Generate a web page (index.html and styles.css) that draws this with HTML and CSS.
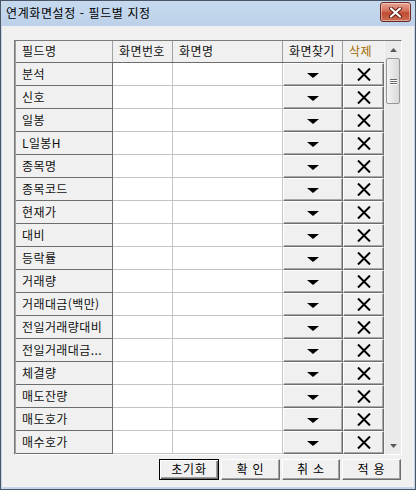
FILE: index.html
```html
<!DOCTYPE html>
<html lang="ko">
<head>
<meta charset="utf-8">
<title>연계화면설정 - 필드별 지정</title>
<link rel="stylesheet" href="styles.css">
</head>
<body>
<div class="win">
  <div class="titlebar">
    <span class="title">연계화면설정 - 필드별 지정</span>
    <div class="close">
      <svg width="15" height="11" viewBox="0 0 15 11"><path d="M3 1.5 L12 9.5 M12 1.5 L3 9.5" stroke="#5a1a10" stroke-width="4" stroke-linecap="round"/><path d="M3 1.5 L12 9.5 M12 1.5 L3 9.5" stroke="#fff" stroke-width="2.2" stroke-linecap="round"/></svg>
    </div>
  </div>
  <div class="body">
    <div class="gridbox">
      <div class="grid">
        <div class="row head">
          <div class="hc">필드명</div>
          <div class="hc">화면번호</div>
          <div class="hc">화면명</div>
          <div class="hc">화면찾기</div>
          <div class="hc del">삭제</div>
        </div>
        <div class="row"><div class="name">분석</div><div class="cell"></div><div class="cell"></div><div class="btn"><span class="tri"></span></div><div class="btn"><svg class="x" viewBox="0 0 14 13"><path d="M1 0.5 L13 12.5 M13 0.5 L1 12.5"/></svg></div></div>
        <div class="row"><div class="name">신호</div><div class="cell"></div><div class="cell"></div><div class="btn"><span class="tri"></span></div><div class="btn"><svg class="x" viewBox="0 0 14 13"><path d="M1 0.5 L13 12.5 M13 0.5 L1 12.5"/></svg></div></div>
        <div class="row"><div class="name">일봉</div><div class="cell"></div><div class="cell"></div><div class="btn"><span class="tri"></span></div><div class="btn"><svg class="x" viewBox="0 0 14 13"><path d="M1 0.5 L13 12.5 M13 0.5 L1 12.5"/></svg></div></div>
        <div class="row"><div class="name">L일봉H</div><div class="cell"></div><div class="cell"></div><div class="btn"><span class="tri"></span></div><div class="btn"><svg class="x" viewBox="0 0 14 13"><path d="M1 0.5 L13 12.5 M13 0.5 L1 12.5"/></svg></div></div>
        <div class="row"><div class="name">종목명</div><div class="cell"></div><div class="cell"></div><div class="btn"><span class="tri"></span></div><div class="btn"><svg class="x" viewBox="0 0 14 13"><path d="M1 0.5 L13 12.5 M13 0.5 L1 12.5"/></svg></div></div>
        <div class="row"><div class="name">종목코드</div><div class="cell"></div><div class="cell"></div><div class="btn"><span class="tri"></span></div><div class="btn"><svg class="x" viewBox="0 0 14 13"><path d="M1 0.5 L13 12.5 M13 0.5 L1 12.5"/></svg></div></div>
        <div class="row"><div class="name">현재가</div><div class="cell"></div><div class="cell"></div><div class="btn"><span class="tri"></span></div><div class="btn"><svg class="x" viewBox="0 0 14 13"><path d="M1 0.5 L13 12.5 M13 0.5 L1 12.5"/></svg></div></div>
        <div class="row"><div class="name">대비</div><div class="cell"></div><div class="cell"></div><div class="btn"><span class="tri"></span></div><div class="btn"><svg class="x" viewBox="0 0 14 13"><path d="M1 0.5 L13 12.5 M13 0.5 L1 12.5"/></svg></div></div>
        <div class="row"><div class="name">등락률</div><div class="cell"></div><div class="cell"></div><div class="btn"><span class="tri"></span></div><div class="btn"><svg class="x" viewBox="0 0 14 13"><path d="M1 0.5 L13 12.5 M13 0.5 L1 12.5"/></svg></div></div>
        <div class="row"><div class="name">거래량</div><div class="cell"></div><div class="cell"></div><div class="btn"><span class="tri"></span></div><div class="btn"><svg class="x" viewBox="0 0 14 13"><path d="M1 0.5 L13 12.5 M13 0.5 L1 12.5"/></svg></div></div>
        <div class="row"><div class="name">거래대금(백만)</div><div class="cell"></div><div class="cell"></div><div class="btn"><span class="tri"></span></div><div class="btn"><svg class="x" viewBox="0 0 14 13"><path d="M1 0.5 L13 12.5 M13 0.5 L1 12.5"/></svg></div></div>
        <div class="row"><div class="name">전일거래량대비</div><div class="cell"></div><div class="cell"></div><div class="btn"><span class="tri"></span></div><div class="btn"><svg class="x" viewBox="0 0 14 13"><path d="M1 0.5 L13 12.5 M13 0.5 L1 12.5"/></svg></div></div>
        <div class="row"><div class="name">전일거래대금...</div><div class="cell"></div><div class="cell"></div><div class="btn"><span class="tri"></span></div><div class="btn"><svg class="x" viewBox="0 0 14 13"><path d="M1 0.5 L13 12.5 M13 0.5 L1 12.5"/></svg></div></div>
        <div class="row"><div class="name">체결량</div><div class="cell"></div><div class="cell"></div><div class="btn"><span class="tri"></span></div><div class="btn"><svg class="x" viewBox="0 0 14 13"><path d="M1 0.5 L13 12.5 M13 0.5 L1 12.5"/></svg></div></div>
        <div class="row"><div class="name">매도잔량</div><div class="cell"></div><div class="cell"></div><div class="btn"><span class="tri"></span></div><div class="btn"><svg class="x" viewBox="0 0 14 13"><path d="M1 0.5 L13 12.5 M13 0.5 L1 12.5"/></svg></div></div>
        <div class="row"><div class="name">매도호가</div><div class="cell"></div><div class="cell"></div><div class="btn"><span class="tri"></span></div><div class="btn"><svg class="x" viewBox="0 0 14 13"><path d="M1 0.5 L13 12.5 M13 0.5 L1 12.5"/></svg></div></div>
        <div class="row"><div class="name">매수호가</div><div class="cell"></div><div class="cell"></div><div class="btn"><span class="tri"></span></div><div class="btn"><svg class="x" viewBox="0 0 14 13"><path d="M1 0.5 L13 12.5 M13 0.5 L1 12.5"/></svg></div></div>
      </div>
      <div class="scrollbar">
        <div class="arrow"><svg width="7" height="4" viewBox="0 0 7 4"><path d="M0 4 L3.5 0 L7 4 Z" fill="#5a5a5a"/></svg></div>
        <div class="thumb"><span class="grip"></span><span class="grip"></span><span class="grip"></span></div>
        <div class="track"></div>
        <div class="arrow"><svg width="7" height="4" viewBox="0 0 7 4"><path d="M0 0 L7 0 L3.5 4 Z" fill="#5a5a5a"/></svg></div>
      </div>
    </div>
    <div class="buttons">
      <div class="pbtn def">초기화</div>
      <div class="pbtn w59">확 인</div>
      <div class="pbtn w58">취 소</div>
      <div class="pbtn w59">적 용</div>
    </div>
  </div>
</div>
</body>
</html>
```
FILE: styles.css
```css
* { box-sizing: border-box; }
html, body { margin: 0; padding: 0; background: #fff; }
body {
  font-family: "Noto Sans CJK KR", "Noto Sans", sans-serif;
  font-size: 12px;
  color: #111;
  letter-spacing: 0.4px;
}
.win {
  width: 416px;
  height: 490px;
  border: 1px solid #4a5666;
  background: #c2d5ea;
  display: flex;
  flex-direction: column;
}
.titlebar {
  height: 25px;
  flex: none;
  display: flex;
  align-items: flex-start;
  justify-content: space-between;
  padding: 0 4px 0 5px;
  background: linear-gradient(#c6d9ee, #bcd1e9);
}
.title {
  font-size: 12px;
  color: #000;
  line-height: 24px;
  letter-spacing: 0.6px;
}
.close {
  width: 31px;
  height: 20px;
  margin-top: 1px;
  border: 1px solid #6b2a20;
  border-radius: 3px;
  background: linear-gradient(#e9a596, #d26e58 45%, #c04a33 55%, #cc6e55);
  display: flex;
  align-items: center;
  justify-content: center;
  box-shadow: inset 0 0 0 1px rgba(255,255,255,0.4);
}
.body {
  flex: 1;
  margin: 0 1px 2px 1px;
  background: #f0f0f0;
  padding: 14px 12px 0 12px;
  display: flex;
  flex-direction: column;
}
.gridbox {
  height: 415px;
  border: 1px solid;
  border-color: #7a7a7a #fff #fff #7a7a7a;
  display: flex;
  background: #f0f0f0;
  overflow: hidden;
}
.grid {
  width: 369px;
  border-left: 1px solid #a0a0a0;
  display: flex;
  flex-direction: column;
}
.row {
  display: grid;
  grid-template-columns: 97px 60px 110px 60px 41px;
  height: 23px;
  flex: none;
}
.row.head {
  height: 22px;
  background: #f0f0f0;
  border-bottom: 1px solid #6d6d6d;
}
.hc {
  border-right: 1px solid #a0a0a0;
  padding-left: 6px;
  line-height: 20px;
  white-space: nowrap;
}
.hc.del { color: #a66a00; border-right: none; }
.name {
  background: #f0f0f0;
  border-right: 1px solid #6d6d6d;
  border-bottom: 1px solid #6d6d6d;
  padding-left: 6px;
  line-height: 22px;
  white-space: nowrap;
  overflow: hidden;
}
.cell {
  background: #fff;
  border-right: 1px solid #c4c4c4;
  border-bottom: 1px solid #c4c4c4;
}
.btn {
  background: #f0f0f0;
  border-top: 1px solid #fff;
  border-left: 1px solid #fff;
  border-right: 1px solid #6d6d6d;
  border-bottom: 1px solid #6d6d6d;
  box-shadow: inset -1px -1px 0 #a8a8a8;
  display: flex;
  align-items: center;
  justify-content: center;
}
.tri {
  width: 0;
  height: 0;
  border-left: 6px solid transparent;
  border-right: 6px solid transparent;
  border-top: 5px solid #000;
  margin-top: 1px;
}
.x {
  width: 14px;
  height: 13px;
  stroke: #000;
  stroke-width: 2;
  fill: none;
}
.scrollbar {
  width: 17px;
  background: #eaeaea;
  border-left: 1px solid #f4f4f4;
  display: flex;
  flex-direction: column;
}
.arrow {
  height: 17px;
  display: flex;
  align-items: center;
  justify-content: center;
  flex: none;
}
.thumb {
  height: 46px;
  margin: 0 1px;
  border: 1px solid #979797;
  border-radius: 2px;
  background: linear-gradient(90deg, #f3f3f3, #e6e6e6 50%, #d9d9d9);
  display: flex;
  flex-direction: column;
  align-items: center;
  justify-content: center;
  gap: 1px;
  flex: none;
}
.grip {
  width: 7px;
  height: 1px;
  background: #6a6a6a;
  box-shadow: 0 1px 0 #fff;
}
.track { flex: 1; }
.buttons {
  display: flex;
  justify-content: flex-end;
  gap: 2px;
  margin-top: 4px;
  padding-right: 1px;
}
.pbtn {
  width: 60px;
  height: 21px;
  background: #f0f0f0;
  border-top: 1px solid #fff;
  border-left: 1px solid #fff;
  border-right: 1px solid #6d6d6d;
  border-bottom: 1px solid #6d6d6d;
  box-shadow: inset -1px -1px 0 #a0a0a0;
  text-align: center;
  line-height: 18px;
  font-size: 12px;
  color: #000;
  letter-spacing: 0.8px;
}
.pbtn.def {
  border: 1px solid #000;
  box-shadow: inset 1px 1px 0 #fff, inset -1px -1px 0 #6d6d6d, inset -2px -2px 0 #a0a0a0;
}
.pbtn.w59 { width: 59px; }
.pbtn.w58 { width: 58px; }
```
